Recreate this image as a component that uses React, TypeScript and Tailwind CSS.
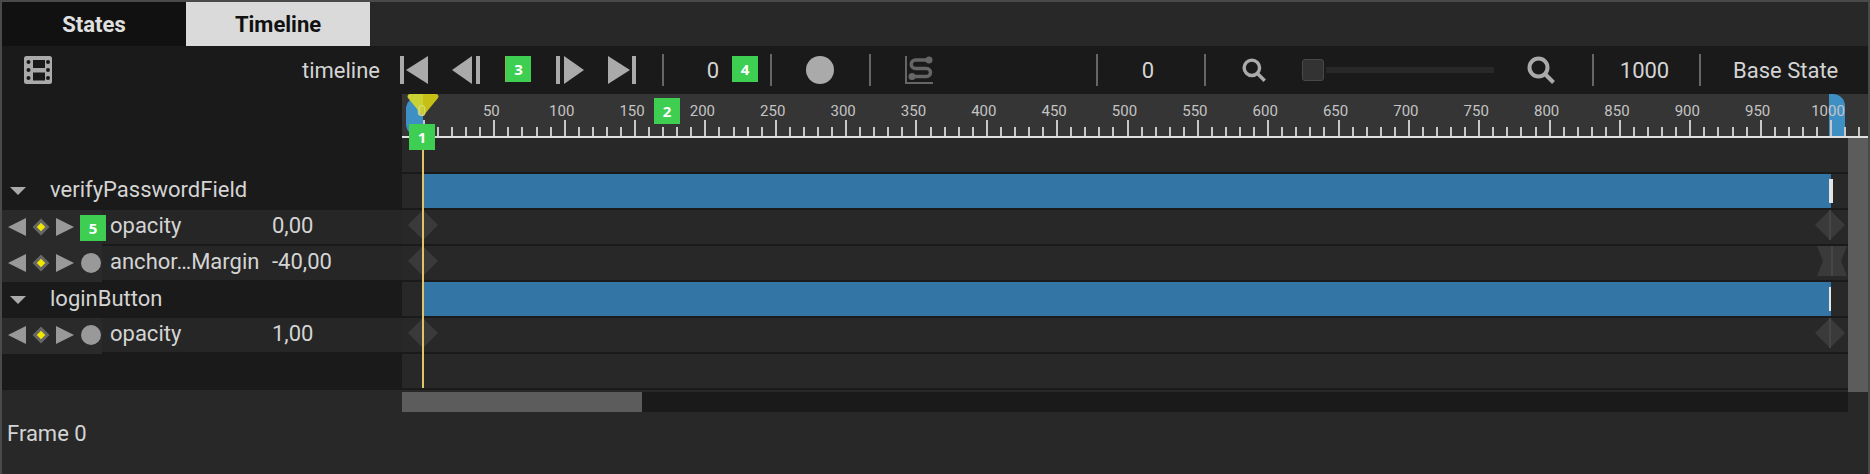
import React from 'react';

const FONT = 'font-[Roboto,sans-serif]';
const TICK_SPACING = 14.07;
const labels = Array.from({ length: 21 }, (_, i) => i * 50);

const Badge = ({ n, className }: { n: number; className: string }) => (
    <div className={`absolute z-30 flex h-[26px] w-[26px] items-center justify-center bg-[#3ecf52] font-['Open_Sans',sans-serif] text-[15px] font-bold text-white ${className}`}>
        {n}
    </div>
);

const Separator = () => <div className="h-8 w-0.5 shrink-0 bg-[#666666]" />;

const Triangle = ({ dir, className }: { dir: 'left' | 'right'; className: string }) => (
    <svg viewBox="0 0 10 10" preserveAspectRatio="none" className={className}>
        <polygon points={dir === 'left' ? '10,0 10,10 0,5' : '0,0 0,10 10,5'} fill="currentColor" />
    </svg>
);

const FilmIcon = () => (
    <svg width="28" height="28" viewBox="0 0 28 28">
        <rect width="28" height="28" rx="2.500" fill="#aaaaaa" />
        <rect x="9" y="4" width="12" height="8" fill="#1a1a1a" />
        <rect x="9" y="16.500" width="12" height="8" fill="#1a1a1a" />
        {[6, 14, 22].map(y => (
            <React.Fragment key={y}>
                <circle cx="4.500" cy={y} r="2" fill="#1a1a1a" />
                <circle cx="24" cy={y} r="2" fill="#1a1a1a" />
            </React.Fragment>
        ))}
    </svg>
);

const SearchIcon = ({ size }: { size: number }) => (
    <svg width={size} height={size} viewBox="0 0 28 28" fill="none" stroke="#aaaaaa">
        <circle cx="11.5" cy="11.5" r="9" strokeWidth="4" />
        <line x1="18" y1="18" x2="26.5" y2="26.5" strokeWidth="4" />
    </svg>
);

const CurveIcon = () => (
    <svg width="28" height="28" viewBox="0 0 28 28" fill="none" stroke="#666666">
        <path d="M1 0V27H28" strokeWidth="2" />
        <path d="M24 4H10.5A4.250 4.250 0 0 0 10.500 12.500H21.500A4 4 0 0 1 21.500 20.500H7" strokeWidth="3.500" />
        <circle cx="24" cy="4" r="3.500" fill="#666666" stroke="none" />
        <circle cx="7" cy="20.500" r="3.500" fill="#666666" stroke="none" />
    </svg>
);

const Toolbar = () => (
    <div className="flex h-12 items-center bg-[#1a1a1a] text-[22px] text-[#d4d4d4]">
        <div className="ml-[22px] flex h-7 w-7 shrink-0">
            <FilmIcon />
        </div>
        <div className="w-[328px] shrink-0 pt-0.5 text-right leading-none">timeline</div>
        <div className="ml-5 flex h-7 shrink-0 items-center text-[#aaaaaa]">
            <div className="h-7 w-1 bg-[#aaaaaa]" />
            <Triangle dir="left" className="ml-0.5 h-7 w-[22px]" />
            <Triangle dir="left" className="ml-6 h-7 w-5" />
            <div className="ml-1 h-7 w-1 bg-[#aaaaaa]" />
            <div className="w-[76px]" />
            <div className="h-7 w-1 bg-[#aaaaaa]" />
            <Triangle dir="right" className="ml-1 h-7 w-5" />
            <Triangle dir="right" className="ml-6 h-7 w-[22px]" />
            <div className="ml-0.5 h-7 w-1 bg-[#aaaaaa]" />
        </div>
        <div className="ml-[26px] flex w-[108px] shrink-0 items-center justify-between">
            <Separator />
            <span className="mr-[51px] ml-auto pt-0.5 leading-none">0</span>
        </div>
        <Separator />
        <div className="ml-[34px] h-7 w-7 shrink-0 rounded-full bg-[#aaaaaa]" />
        <div className="ml-[35px]">
            <Separator />
        </div>
        <div className="ml-[34px] flex h-7 w-7 shrink-0">
            <CurveIcon />
        </div>
        <div className="ml-[163px]">
            <Separator />
        </div>
        <div className="w-[106px] shrink-0 pt-0.5 pr-1.5 text-center leading-none">0</div>
        <Separator />
        <div className="ml-9 flex h-6 w-6 shrink-0">
            <SearchIcon size={24} />
        </div>
        <div className="ml-9 h-[22px] w-[22px] shrink-0 rounded-[3px] border border-[#484848] bg-[#333333]" />
        <div className="ml-0.5 h-1.5 w-[168px] shrink-0 bg-[#282828]" />
        <div className="ml-[33px] flex h-7 w-7 shrink-0">
            <SearchIcon size={28} />
        </div>
        <div className="ml-[37px]">
            <Separator />
        </div>
        <div className="w-[105px] shrink-0 pt-0.5 pr-1 text-center leading-none">1000</div>
        <Separator />
        <div className="ml-8 shrink-0 pt-0.5 leading-none whitespace-nowrap">Base State</div>
    </div>
);

const Ruler = () => (
    <div className="relative h-11 shrink-0 bg-[#353535]">
        <div className="absolute top-[3px] left-[4px] h-[39px] w-[17px] rounded-l-xl bg-[#3e90c4]" />
        <div className="absolute top-0 left-[1427px] h-[42px] w-4 rounded-tr-xl bg-[#3e90c4]" />
        {labels.map(label => (
            <span
                key={label}
                className="absolute top-[10px] -translate-x-1/2 text-[15px] leading-none text-[#c4c4c4]"
                style={{ left: 19 + (label / 10) * TICK_SPACING }}
            >
                {label}
            </span>
        ))}
        <svg width="1466" height="44" className="absolute top-0 left-0">
            {Array.from({ length: 104 }, (_, i) => {
                const x = Math.round(21 + i * TICK_SPACING);
                const major = i % 5 === 0;
                return <rect key={i} x={x} y={major ? 26 : 33} width="2" height={major ? 16 : 9} fill="#c8c8c8" />;
            })}
            <rect x="0" y="42" width="1466" height="2" fill="#e0e0e0" />
        </svg>
        <svg width="32" height="22" viewBox="0 0 32 22" className="absolute top-0 left-[5px]">
            <path d="M16 0H3A2.500 2.500 0 0 0 1 4L15 21H16Z" fill="#c8d232" />
            <path d="M16 0H29A2.500 2.500 0 0 1 31 4L17 21H16Z" fill="#c6c016" />
        </svg>
        <span className="absolute top-[10px] left-[20px] -translate-x-1/2 text-[15px] leading-none text-[#d6da7c]">0</span>
    </div>
);

const Lane = ({ bar, handle, children }: { bar?: boolean; handle?: string; children?: React.ReactNode }) => (
    <div className="relative h-[34px] shrink-0 bg-[#282828]">
        {bar && (
            <div className="absolute inset-y-0 right-[17px] left-[21px] bg-[#3376a5]">
                <div className={`absolute bg-[#e4e4e4] ${handle}`} />
            </div>
        )}
        {children}
    </div>
);

const KeyDiamond = ({ left, bow }: { left: string; bow?: boolean }) => (
    <svg width="30" height="30" viewBox="0 0 30 30" className={`absolute top-0 ${left}`}>
        <polygon points={bow ? '0,0 30,0 24,15 30,30 0,30 6,15' : '15,0 30,15 15,30 0,15'} fill="#3a3a3a" />
        <rect x="14" y="0" width="2" height="30" fill="#464646" />
    </svg>
);

const Lanes = () => (
    <div className="flex h-[252px] w-[1446px] flex-col gap-0.5 bg-[#1a1a1a]">
        <Lane />
        <Lane bar handle="top-[5px] right-[-2px] h-6 w-1" />
        <Lane>
            <KeyDiamond left="left-[6px]" />
            <KeyDiamond left="left-[1413px]" />
        </Lane>
        <Lane>
            <KeyDiamond left="left-[6px]" />
            <KeyDiamond left="left-[1415px]" bow />
        </Lane>
        <Lane bar handle="top-[5px] right-0 h-6 w-0.5" />
        <Lane>
            <KeyDiamond left="left-[6px]" />
            <KeyDiamond left="left-[1413px]" />
        </Lane>
        <Lane />
    </div>
);

const GroupRow = ({ name, height }: { name: string; height: string }) => (
    <div className={`flex items-center bg-[#1a1a1a] text-[22px] text-[#d4d4d4] ${height}`}>
        <svg width="16" height="8" viewBox="0 0 16 8" className="ml-2 shrink-0">
            <polygon points="0,0 16,0 8,8" fill="#aaaaaa" />
        </svg>
        <span className="ml-6 pb-0.5 leading-none">{name}</span>
    </div>
);

const PropertyRow = ({ name, value, recorded = true }: { name: string; value: string; recorded?: boolean }) => (
    <div className="relative flex h-9 items-start">
        <div className="flex h-9 w-[100px] shrink-0 items-start bg-[#2a2a2a] pt-2 pl-1.5 text-[#999999]">
            <Triangle dir="left" className="h-[18px] w-[18px]" />
            <div className="relative ml-1.5 h-[18px] w-[18px]">
                <div className="absolute inset-[3px] rotate-45 bg-[#666666]" />
                <div className="absolute inset-[6px] rotate-45 bg-[#f0e800]" />
            </div>
            <Triangle dir="right" className="ml-1.5 h-[18px] w-[18px]" />
            {recorded && <div className="mt-[-1px] ml-[7px] h-5 w-5 rounded-full bg-[#999999]" />}
        </div>
        <div className="flex h-[34px] flex-1 items-center bg-[#262626] pb-0.5 text-[22px] text-[#d4d4d4]">
            <span className="ml-2 w-[162px] shrink-0 leading-none whitespace-nowrap">{name}</span>
            <span className="leading-none">{value}</span>
        </div>
    </div>
);

export default function App() {
    return (
        <div className={`relative flex h-[474px] w-[1870px] flex-col overflow-hidden border-x-2 border-t-2 border-[#4a4a4a] bg-[#282828] ${FONT}`}>
            <div className="flex h-11 text-[22px] font-bold">
                <div className="flex w-[184px] items-center justify-center bg-[#111111] text-[#e0e0e0]">States</div>
                <div className="flex w-[184px] items-center justify-center bg-[#dadada] text-[#111111]">Timeline</div>
            </div>
            <Toolbar />
            <div className="flex h-[298px]">
                <div className="flex h-[296px] w-[400px] shrink-0 flex-col bg-[#1a1a1a]">
                    <div className="h-[78px]" />
                    <GroupRow name="verifyPasswordField" height="h-[38px]" />
                    <PropertyRow name="opacity" value="0,00" recorded={false} />
                    <PropertyRow name="anchor…Margin" value="-40,00" />
                    <GroupRow name="loginButton" height="h-9" />
                    <PropertyRow name="opacity" value="1,00" />
                </div>
                <div className="relative flex flex-1 flex-col">
                    <Ruler />
                    <div className="flex flex-1 items-start">
                        <Lanes />
                        <div className="h-[254px] w-5 bg-[#5c5c5c]" />
                    </div>
                    <div className="absolute top-[34px] bottom-[4px] left-5 z-20 w-0.5 bg-[#e0c468]" />
                </div>
            </div>
            <div className="ml-[400px] flex h-5 w-[1446px] shrink-0 bg-[#1a1a1a]">
                <div className="w-60 bg-[#5c5c5c]" />
            </div>
            <div className="mt-[11px] ml-[5px] text-[22px] leading-none text-[#d4d4d4]">Frame 0</div>
            <Badge n={1} className="top-[122px] left-[407px]" />
            <Badge n={2} className="top-[96px] left-[652px]" />
            <Badge n={3} className="top-[54px] left-[503px] border-l border-[#8fb04a]" />
            <Badge n={4} className="top-[54px] left-[730px]" />
            <Badge n={5} className="top-[213px] left-[78px]" />
        </div>
    );
}
